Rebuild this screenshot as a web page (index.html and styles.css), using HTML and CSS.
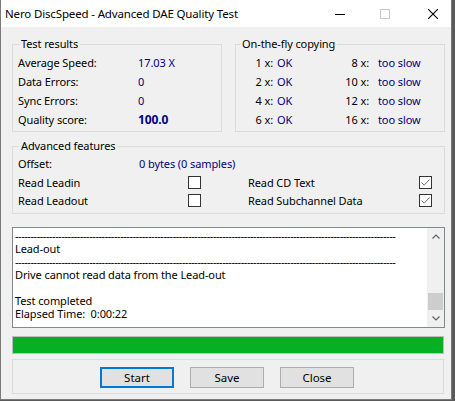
FILE: index.html
```html
<!DOCTYPE html>
<html>
<head>
<meta charset="utf-8">
<link rel="stylesheet" href="styles.css">
</head>
<body>
<div class="window">
  <div class="titlebar">
    <span class="title">Nero DiscSpeed - Advanced DAE Quality Test</span>
    <div class="controls">
      <span class="ctl ctl-min"><svg width="10" height="10" viewBox="0 0 10 10"><line x1="0" y1="5.5" x2="10" y2="5.5" stroke="#000" stroke-width="1"/></svg></span>
      <span class="ctl ctl-max"><svg width="10" height="10" viewBox="0 0 10 10"><rect x="0.5" y="0.5" width="9" height="9" fill="none" stroke="#c8c8c8" stroke-width="1"/></svg></span>
      <span class="ctl ctl-close"><svg width="10" height="10" viewBox="0 0 10 10"><path d="M0 0 L10 10 M10 0 L0 10" stroke="#000" stroke-width="1.1"/></svg></span>
    </div>
  </div>
  <div class="client">
    <div class="top-row">
      <fieldset class="group results">
        <legend>Test results</legend>
        <div class="res-row"><span class="lbl">Average Speed:</span><span class="val">17.03 X</span></div>
        <div class="res-row"><span class="lbl">Data Errors:</span><span class="val">0</span></div>
        <div class="res-row"><span class="lbl">Sync Errors:</span><span class="val">0</span></div>
        <div class="res-row"><span class="lbl">Quality score:</span><span class="val bold">100.0</span></div>
      </fieldset>
      <fieldset class="group fly">
        <legend>On-the-fly copying</legend>
        <div class="fly-grid">
          <span class="sp">1 x:</span><span class="st">OK</span><span class="sp">8 x:</span><span class="st2">too slow</span>
          <span class="sp">2 x:</span><span class="st">OK</span><span class="sp">10 x:</span><span class="st2">too slow</span>
          <span class="sp">4 x:</span><span class="st">OK</span><span class="sp">12 x:</span><span class="st2">too slow</span>
          <span class="sp">6 x:</span><span class="st">OK</span><span class="sp">16 x:</span><span class="st2">too slow</span>
        </div>
      </fieldset>
    </div>
    <fieldset class="group adv">
      <legend>Advanced features</legend>
      <div class="adv-row offset"><span class="off-lbl">Offset:</span><span class="val">0 bytes (0 samples)</span></div>
      <div class="adv-row">
        <div class="cell"><span>Read Leadin</span><span class="cb"></span></div>
        <div class="cell"><span>Read CD Text</span><span class="cb"><svg width="11" height="11" viewBox="0 0 11 11"><polyline points="1.5,5.5 4.2,8.2 9.5,2.5" fill="none" stroke="#6a6a6a" stroke-width="1"/></svg></span></div>
      </div>
      <div class="adv-row">
        <div class="cell"><span>Read Leadout</span><span class="cb"></span></div>
        <div class="cell"><span>Read Subchannel Data</span><span class="cb"><svg width="11" height="11" viewBox="0 0 11 11"><polyline points="1.5,5.5 4.2,8.2 9.5,2.5" fill="none" stroke="#6a6a6a" stroke-width="1"/></svg></span></div>
      </div>
    </fieldset>
    <div class="log">
      <div class="log-text">
        <div class="dash">---------------------------------------------------------------------------------------------------------------------------</div>
        <div>Lead-out</div>
        <div class="dash">---------------------------------------------------------------------------------------------------------------------------</div>
        <div>Drive cannot read data from the Lead-out</div>
        <div>&nbsp;</div>
        <div>Test completed</div>
        <div>Elapsed Time:&nbsp; 0:00:22</div>
      </div>
      <div class="scrollbar">
        <div class="sb-btn"><svg width="8" height="5" viewBox="0 0 8 5"><polyline points="0.5,4.5 4,1 7.5,4.5" fill="none" stroke="#606060" stroke-width="1.2"/></svg></div>
        <div class="sb-track"><div class="sb-thumb"></div></div>
        <div class="sb-btn"><svg width="8" height="5" viewBox="0 0 8 5"><polyline points="0.5,0.5 4,4 7.5,0.5" fill="none" stroke="#606060" stroke-width="1.2"/></svg></div>
      </div>
    </div>
    <div class="progress"><div class="progress-fill"></div></div>
    <div class="buttons">
      <button class="btn default">Start</button>
      <button class="btn">Save</button>
      <button class="btn">Close</button>
    </div>
  </div>
</div>
</body>
</html>
```
FILE: styles.css
```css
html, body {
  margin: 0;
  padding: 0;
}
body {
  background: #5a5a5a;
  width: 455px;
  height: 401px;
  overflow: hidden;
  font-family: "Noto Sans", "Open Sans", sans-serif;
  font-size: 11px;
  letter-spacing: -0.1px;
  color: #000;
}
.window {
  width: 452px;
  height: 400px;
  box-sizing: border-box;
  border: 1px solid #7a7a7a;
  border-top: none;
  background: #f0f0f0;
  display: flex;
  flex-direction: column;
}
.titlebar {
  height: 27px;
  flex: none;
  background: #fff;
  display: flex;
  align-items: center;
  justify-content: space-between;
  padding-left: 4px;
}
.title {
  font-size: 11.5px;
  letter-spacing: -0.15px;
  padding-bottom: 1px;
}
.controls {
  display: flex;
  height: 27px;
}
.ctl {
  display: flex;
  align-items: center;
  justify-content: center;
  width: 45px;
}
.ctl-close {
  width: 44px;
  justify-content: flex-start;
  padding-left: 21px;
  box-sizing: border-box;
}
.client {
  padding: 9px 6px 5px 11px;
  flex: 1;
}
.top-row {
  display: flex;
  gap: 13px;
  width: 433px;
}
.group {
  margin: 0;
  border: 1px solid #dcdcdc;
  min-width: 0;
  box-sizing: border-box;
}
.group legend {
  line-height: 16px;
  height: 16px;
  padding: 0 2px;
  margin-left: 1px;
}
.results, .fly {
  width: 210px;
  height: 96px;
  padding: 1px 5px 2px 5px;
}
.res-row {
  height: 19px;
  display: flex;
  align-items: center;
}
.lbl {
  width: 120px;
}
.val {
  color: #000080;
}
.bold {
  font-weight: bold;
  font-size: 12px;
}
.fly legend {
  margin-left: 0;
  padding-left: 1px;
}
.fly-grid {
  display: grid;
  grid-template-columns: 32px 54px 42px 1fr;
  grid-auto-rows: 19px;
  align-items: center;
}
.sp {
  text-align: right;
}
.st {
  padding-left: 4px;
  color: #000080;
}
.st2 {
  padding-left: 9px;
  color: #000080;
}
.adv {
  margin-top: 6px;
  width: 433px;
  height: 76px;
  padding: 0 5px 4px 5px;
}
.adv-row {
  display: flex;
  height: 18px;
  align-items: center;
  gap: 47px;
}
.adv-row.offset {
  height: 19px;
  gap: 0;
}
.off-lbl {
  width: 121px;
}
.cell {
  width: 183px;
  display: flex;
  justify-content: space-between;
  align-items: center;
}
.adv-row .cell + .cell {
  width: 184px;
}
.cb {
  width: 13px;
  height: 13px;
  box-sizing: border-box;
  border: 1px solid #333;
  background: #fff;
  display: flex;
  align-items: center;
  justify-content: center;
}
.log {
  margin-top: 13px;
  width: 433px;
  height: 101px;
  box-sizing: border-box;
  border: 1px solid #828790;
  background: #fff;
  display: flex;
}
.log-text {
  flex: 1;
  padding: 1px 2px;
  line-height: 13px;
  overflow: hidden;
  white-space: nowrap;
}
.dash {
  letter-spacing: -0.45px;
}
.scrollbar {
  width: 17px;
  background: #f0f0f0;
  display: flex;
  flex-direction: column;
}
.sb-btn {
  height: 17px;
  display: flex;
  align-items: center;
  justify-content: center;
}
.sb-track {
  flex: 1;
  display: flex;
  flex-direction: column;
  justify-content: flex-end;
  padding: 0 1px;
}
.sb-thumb {
  height: 17px;
  background: #cdcdcd;
}
.progress {
  margin-top: 8px;
  width: 432px;
  height: 18px;
  box-sizing: border-box;
  border: 1px solid #bcbcbc;
  background: #e6e6e6;
}
.progress-fill {
  height: 100%;
  background: #06b025;
}
.buttons {
  margin-top: 5px;
  width: 432px;
  height: 35px;
  box-sizing: border-box;
  border: 1px solid #dcdcdc;
  display: flex;
  justify-content: center;
  align-items: flex-start;
  gap: 16px;
  padding-top: 7px;
  padding-right: 2px;
}
.btn {
  width: 74px;
  height: 21px;
  box-sizing: border-box;
  border: 1px solid #adadad;
  background: #e1e1e1;
  font-family: inherit;
  font-size: 11.5px;
  color: #000;
  padding: 0;
  margin: 0;
}
.btn.default {
  border: 2px solid #0078d7;
}
```
